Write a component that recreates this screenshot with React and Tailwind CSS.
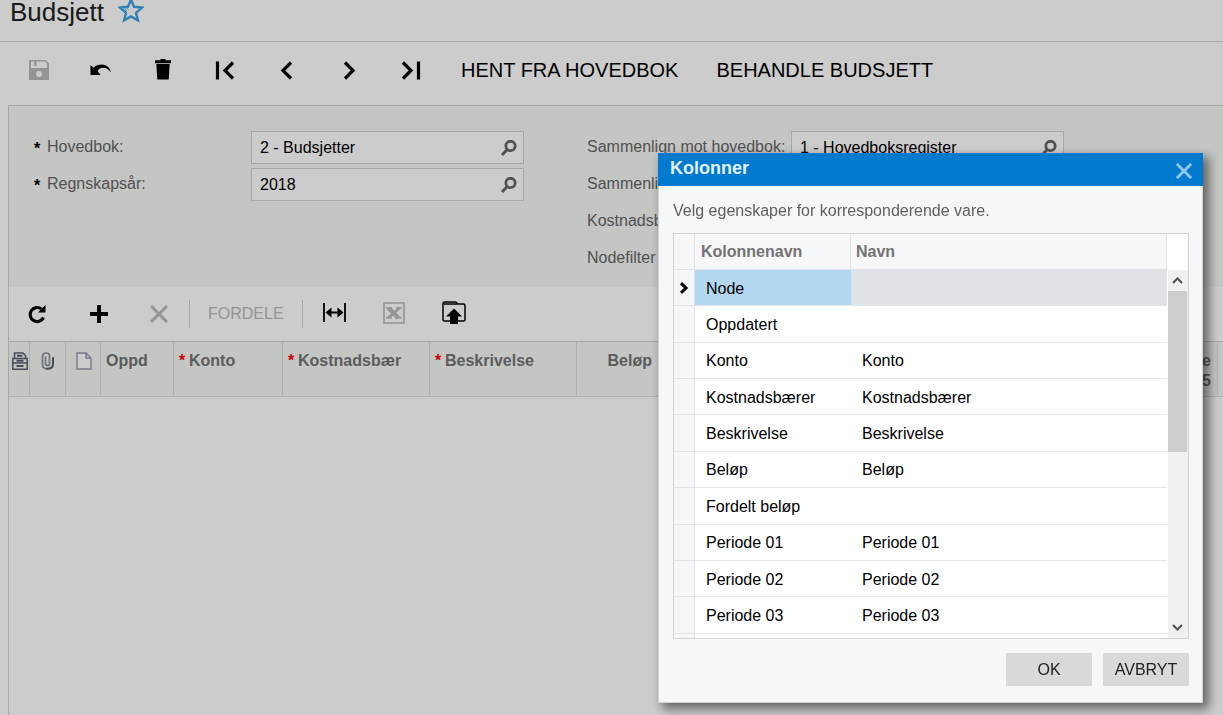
import { useState } from 'react';
import clsx from 'clsx';

const FIELDS = [
    { id: 'ledger', label: 'Hovedbok:', value: '2 - Budsjetter', required: true },
    { id: 'year', label: 'Regnskapsår:', value: '2018', required: true },
];

const COMPARE_FIELDS = [
    { id: 'compareLedger', label: 'Sammenlign mot hovedbok:', value: '1 - Hovedboksregister' },
    { id: 'compareYear', label: 'Sammenlign mot år:', value: '' },
    { id: 'costUnit', label: 'Kostnadsbærer:', value: '' },
    { id: 'nodeFilter', label: 'Nodefilter', value: '' },
];

const PERIODS = ['Periode 01', 'Periode 02', 'Periode 03', 'Periode 04', 'Periode 05'];

const COLUMNS = [
    ['Node', ''],
    ['Oppdatert', ''],
    ['Konto', 'Konto'],
    ['Kostnadsbærer', 'Kostnadsbærer'],
    ['Beskrivelse', 'Beskrivelse'],
    ['Beløp', 'Beløp'],
    ['Fordelt beløp', ''],
    ['Periode 01', 'Periode 01'],
    ['Periode 02', 'Periode 02'],
    ['Periode 03', 'Periode 03'],
    ['Periode 04', 'Periode 04'],
];

function StarIcon() {
    return (
        <svg width="26" height="24" viewBox="0 0 26 24" fill="none" stroke="#3ba3e0" strokeWidth="2.4">
            <path d="M13-.5l3 7.300 8 .8-6 5.200 1.900 7.600L13 16.400l-6.900 4L8 12.800 2 7.600l8-.8z" />
            <path d="M6.500 9l2.500 2M8.500 8l2 1.500" strokeWidth="1" />
        </svg>
    );
}

function SaveIcon() {
    return (
        <svg width="20" height="20" viewBox="0 0 20 20" fill="#bababa" fillRule="evenodd">
            <path d="M0 0h16.500L20 3.500V20H0zM2 1.500V8h16V3.800L15.800 1.500H7.500V6H5.200V1.500zM10 11a3 3 0 1 0 0 6 3 3 0 0 0 0-6z" />
        </svg>
    );
}

function UndoIcon() {
    return (
        <svg width="22" height="12" viewBox="0 0 22 12">
            <path d="M.5 1l3 2.700C7 .2 12-.3 15.500 1.200c3 1.300 4.800 3.600 5.300 7.300-2.300-3.400-4.800-4.800-7.800-4.800-2.200 0-4 .8-5.400 3.200L10.500 11H.5z" />
        </svg>
    );
}

function TrashIcon() {
    return (
        <svg width="18" height="22" viewBox="0 0 18 22">
            <path d="M6.500 0h5v1.200H17v3H1v-3h5.500zM2.300 5h13.400l-1 15.500H3.300z" />
        </svg>
    );
}

function ChevronIcon({ back, bar }) {
    return (
        <svg width="20" height="20" viewBox="0 0 20 20" fill="none" stroke="#000" strokeWidth="3.200">
            <g transform={back ? 'matrix(-1 0 0 1 20 0)' : undefined}>
                {bar ? <path d="M2 2.500l8 8-8 8M17.500 1.500v18" /> : <path d="M6 2.500l8 8-8 8" />}
            </g>
        </svg>
    );
}

function SearchIcon() {
    return (
        <svg width="16" height="16" viewBox="0 0 16 16" fill="none" stroke="#666">
            <circle cx="9.500" cy="6" r="4.700" strokeWidth="2.800" />
            <path d="M6.300 9.500L1 15" strokeWidth="3" />
        </svg>
    );
}

function RefreshIcon() {
    return (
        <svg width="24" height="20" viewBox="0 0 24 20">
            <path d="M16.500 13.500A7 7 0 1 1 14.500 5" fill="none" stroke="#000" strokeWidth="3.200" />
            <path d="M18.500 1v7.500H11z" />
        </svg>
    );
}

function PlusIcon() {
    return (
        <svg width="18" height="18" viewBox="0 0 18 18" stroke="#000" strokeWidth="4">
            <path d="M9 0v18M0 9h18" />
        </svg>
    );
}

function CrossIcon({ size, width, color }) {
    return (
        <svg width={size} height={size} viewBox="0 0 18 18" fill="none" stroke={color} strokeWidth={width}>
            <path d="M1 1l16 16M17 1L1 17" />
        </svg>
    );
}

function FitIcon() {
    return (
        <svg width="24" height="20" viewBox="0 0 24 20">
            <path d="M2 0v19M23 0v19M6 9.500h12" stroke="#000" strokeWidth="1.800" />
            <path d="M3.500 9.500l6-5v10zM21.500 9.500l-6-5v10z" />
        </svg>
    );
}

function ExcelIcon() {
    return (
        <svg width="22" height="22" viewBox="0 0 22 22" fill="none" stroke="#bababa">
            <rect x="1" y="1" width="20" height="20" strokeWidth="1.600" />
            <path d="M5.500 6l10 10" strokeWidth="4.500" />
            <path d="M16.500 6L5 16" strokeWidth="2.500" />
            <path d="M3 6h6M13 6h6M3 15.800h6M12 15.800h7" strokeWidth="1.500" />
        </svg>
    );
}

function UploadIcon() {
    return (
        <svg width="24" height="24" viewBox="0 0 24 24">
            <path d="M8 20H2.500Q1 20 1 18.500V3Q1 1 3 1h10q2 0 2 2h6.500Q23 3 23 4.500v14q0 1.500-1.500 1.500H16M2 3h13" fill="none" stroke="#000" strokeWidth="1.500" />
            <path d="M12 7.500l8 8h-4V23H8v-7.500H4z" />
        </svg>
    );
}

function RecordIcon() {
    return (
        <svg width="16" height="18" viewBox="0 0 16 18" fill="none" stroke="#566070" strokeWidth="1.500">
            <path d="M2.500 6V1h8.500l2.500 2.500V6M.8 6.500h14.400v4.500H.8zM.8 11h14.400v6.200H.8z" />
            <path d="M5 3.800h5.500M4.500 8.800h7M4.500 14h7" strokeWidth="2" />
        </svg>
    );
}

function ClipIcon() {
    return (
        <svg width="14" height="18" viewBox="0 0 14 18" fill="none" strokeLinecap="round">
            <path d="M4.500 5v6.500q0 2 2 2t2-2V4q0-3-3.500-3T1.500 4v8.500q0 4 4.500 4.300" stroke="#8b919c" strokeWidth="1.700" />
            <path d="M6 16.800q6 0 6-4.500V6" stroke="#566070" strokeWidth="2" />
        </svg>
    );
}

function PageIcon() {
    return (
        <svg width="16" height="18" viewBox="0 0 16 18" fill="#fff" stroke="#9298a5" strokeWidth="1.400">
            <path d="M1 1h9l5 5v11H1zM10 1v5h5" />
        </svg>
    );
}

function IconButton({ label, wide, disabled, onClick, children }) {
    return (
        <button
            type="button"
            aria-label={label}
            disabled={disabled}
            onClick={onClick}
            className={clsx('flex h-full items-center justify-center', wide ? 'w-[62px]' : 'w-[60px]')}
        >
            {children}
        </button>
    );
}

function LookupField({ field }) {
    const [value, setValue] = useState(field.value);

    return (
        <>
            <label htmlFor={field.id} className="flex items-center pb-0.5 whitespace-nowrap text-[#666]">
                {field.required && <span className="w-[13px] pt-1 font-bold text-black">*</span>}
                {field.label}
            </label>
            <div className="flex h-[33px] items-center border border-[#d0d2d2] bg-white">
                <input
                    id={field.id}
                    value={value}
                    onChange={(e) => setValue(e.target.value)}
                    className="h-full min-w-0 flex-1 bg-transparent pl-2 text-black outline-none"
                />
                <button type="button" aria-label={`Søk ${field.label}`} className="flex w-7 justify-center">
                    <SearchIcon />
                </button>
            </div>
        </>
    );
}

function HeaderCell({ className, required, children }) {
    return (
        <th className={clsx('border-r border-b border-[#d8dbe1] pt-[9px] align-top font-bold', className)}>
            <div className="flex overflow-hidden">
                {required && <span className="w-[10px] shrink-0 text-[#ff0000]">*</span>}
                <span>{children}</span>
            </div>
        </th>
    );
}

function BudgetGrid() {
    return (
        <table className="w-full table-fixed border-separate border-spacing-0 border-t border-[#d0d2d2] text-left leading-5 text-[#737373]">
            <thead>
                <tr className="h-[55px] bg-[#f5f8f6]">
                    <th className="w-[21px] border-r border-b border-[#d8dbe1] pt-[10px] pl-[3px] align-top"><RecordIcon /></th>
                    <th className="w-[36px] border-r border-b border-[#d8dbe1] pt-[10px] pl-[11px] align-top"><ClipIcon /></th>
                    <th className="w-[35px] border-r border-b border-[#d8dbe1] pt-[10px] pl-[10px] align-top"><PageIcon /></th>
                    <HeaderCell className="w-[73px] pr-[25px] pl-[5px]">Oppd</HeaderCell>
                    <HeaderCell className="w-[109px] pr-[25px] pl-[5px]" required>Konto</HeaderCell>
                    <HeaderCell className="w-[147px] pr-[25px] pl-[5px]" required>Kostnadsbær</HeaderCell>
                    <HeaderCell className="w-[147px] pr-[25px] pl-[5px]" required>Beskrivelse</HeaderCell>
                    <th className="w-[82px] border-r border-b border-[#d8dbe1] pt-[9px] pr-[6px] text-right align-top">Beløp</th>
                    <th className="w-[94px] border-r border-b border-[#d8dbe1] pt-[9px] pr-[6px] text-right align-top">Fordelt beløp</th>
                    {PERIODS.map((period) => (
                        <th key={period} className="w-[93px] border-r border-b border-[#d8dbe1] pt-[9px] pr-[6px] pl-3 text-right align-top">
                            {period}
                        </th>
                    ))}
                    <th className="border-b border-[#d8dbe1]" />
                </tr>
            </thead>
        </table>
    );
}

function ScrollBar() {
    return (
        <div className="flex w-[21px] flex-col bg-white pt-9 pl-px">
            <div className="flex flex-1 flex-col bg-[#f0f0f0]">
                <svg className="ml-1" width="11" height="21" viewBox="0 0 11 21" fill="none" stroke="#505050" strokeWidth="2">
                    <path d="M1 13l4.500-4.500L10 13" />
                </svg>
                <div className="h-[161px] w-[19px] bg-[#cdcdcd]" />
                <svg className="mt-auto ml-1" width="11" height="21" viewBox="0 0 11 21" fill="none" stroke="#505050" strokeWidth="2">
                    <path d="M1 8l4.500 4.500L10 8" />
                </svg>
            </div>
        </div>
    );
}

function ColumnsDialog({ onClose }) {
    const [selected, setSelected] = useState(0);

    return (
        <div className="fixed inset-0 flex items-start justify-end bg-black/20 pt-[153px] pr-5">
            <div
                role="dialog"
                aria-labelledby="columns-title"
                className="w-[545px] bg-[#f5f7f9] shadow-[5px_5px_10px_1px_rgba(0,0,0,0.5)]"
            >
                <div className="flex h-[33px] items-start justify-between bg-[#007acf] pr-[11px] pl-3">
                    <h2 id="columns-title" className="text-lg leading-[30px] font-bold text-[#e2f1fb]">Kolonner</h2>
                    <button type="button" aria-label="Lukk" onClick={onClose} className="pt-[10px]">
                        <CrossIcon size={16} width={3.200} color="#92c8ed" />
                    </button>
                </div>

                <div className="border border-t-0 border-[#cfd2d6] px-[14px] pb-4">
                    <p className="pt-[13px] pb-[10px] leading-6 text-[#606060]">Velg egenskaper for korresponderende vare.</p>

                    <div className="mr-[-1px] flex h-[406px] overflow-hidden border border-[#cfd2d5]">
                        <table className="h-[436px] flex-1 table-fixed border-separate border-spacing-0 bg-white text-left text-black">
                            <thead>
                                <tr className="h-9 bg-[#f5f7f9] text-[#737373]">
                                    <th className="w-[21px] border-r border-b border-[#dfe2e6]" />
                                    <th className="w-[156px] border-r border-b border-[#dfe2e6] pl-[6px]">Kolonnenavn</th>
                                    <th className="border-r border-b border-[#dfe2e6] pl-[5px]">Navn</th>
                                </tr>
                            </thead>
                            <tbody>
                                {COLUMNS.map(([column, name], i) => (
                                    <tr key={column} onClick={() => setSelected(i)} className="h-9">
                                        <td className="border-r border-b border-[#dfe2e6] bg-[#f5f7f9] pl-[5px]">
                                            {i === selected && (
                                                <svg width="10" height="12" viewBox="0 0 10 12" fill="none" stroke="#000" strokeWidth="3">
                                                    <path d="M2 1.200L7 6l-5 4.800" />
                                                </svg>
                                            )}
                                        </td>
                                        <td className={clsx('border-b border-[#e4e6e9] pt-0.5 pl-[11px]', i === selected && 'bg-[#b4d7f0]')}>
                                            {column}
                                        </td>
                                        <td className={clsx('border-b border-[#e4e6e9] pt-0.5 pl-[11px]', i === selected && 'bg-[#dfe2e7]')}>
                                            {name}
                                        </td>
                                    </tr>
                                ))}
                            </tbody>
                        </table>
                        <ScrollBar />
                    </div>

                    <div className="mr-[-1px] flex justify-end gap-[11px] pt-[14px]">
                        <button type="button" onClick={onClose} className="h-[33px] w-[86px] bg-[#d7d9db] text-[#222]">OK</button>
                        <button type="button" onClick={onClose} className="h-[33px] w-[86px] bg-[#d7d9db] text-[#222]">AVBRYT</button>
                    </div>
                </div>
            </div>
        </div>
    );
}

export default function App() {
    const [open, setOpen] = useState(true);

    return (
        <div className="flex h-screen flex-col overflow-hidden bg-white font-['Liberation_Sans',Arial,sans-serif] text-base text-black">
            <header className="flex h-[42px] shrink-0 items-start gap-[14px] border-b border-[#d0d2d2] pl-[10px]">
                <h1 className="text-[26px] leading-6 text-[#222]">Budsjett</h1>
                <button type="button" aria-label="Favoritt"><StarIcon /></button>
            </header>

            <div className="flex h-14 shrink-0 items-center pl-2 text-xl">
                <IconButton label="Lagre" wide disabled><SaveIcon /></IconButton>
                <IconButton label="Angre" wide><UndoIcon /></IconButton>
                <IconButton label="Slett" wide><TrashIcon /></IconButton>
                <IconButton label="Første" wide><ChevronIcon back bar /></IconButton>
                <IconButton label="Forrige" wide><ChevronIcon back /></IconButton>
                <IconButton label="Neste" wide><ChevronIcon /></IconButton>
                <IconButton label="Siste" wide><ChevronIcon bar /></IconButton>
                <button type="button" className="px-[19px] whitespace-nowrap">HENT FRA HOVEDBOK</button>
                <button type="button" className="px-[19px] whitespace-nowrap">BEHANDLE BUDSJETT</button>
            </div>

            <main className="mt-[7px] ml-2 flex flex-1 flex-col border-t border-l border-[#d0d2d2]">
                <form className="flex items-start gap-[63px] bg-[#f5f8f6] pt-[25px] pb-3 pl-[25px]">
                    <div className="grid grid-cols-[217px_273px] gap-y-1">
                        {FIELDS.map((field) => (
                            <LookupField key={field.id} field={field} />
                        ))}
                    </div>
                    <div className="grid grid-cols-[204px_273px] gap-y-1">
                        {COMPARE_FIELDS.map((field) => (
                            <LookupField key={field.id} field={field} />
                        ))}
                    </div>
                </form>

                <div className="flex h-[54px] items-center">
                    <IconButton label="Oppdater"><RefreshIcon /></IconButton>
                    <IconButton label="Legg til"><PlusIcon /></IconButton>
                    <IconButton label="Fjern" disabled><CrossIcon size={18} width={3} color="#bababa" /></IconButton>
                    <button type="button" disabled className="h-7 border-x border-[#d0d2d2] px-[18px] text-[#bababa]">FORDELE</button>
                    <div className="flex h-full pb-0.5 pl-px">
                        <IconButton label="Tilpass bredde"><FitIcon /></IconButton>
                        <IconButton label="Eksporter til Excel" disabled><ExcelIcon /></IconButton>
                        <IconButton label="Last opp" onClick={() => setOpen(true)}><UploadIcon /></IconButton>
                    </div>
                </div>

                <BudgetGrid />
            </main>

            {open && <ColumnsDialog onClose={() => setOpen(false)} />}
        </div>
    );
}
